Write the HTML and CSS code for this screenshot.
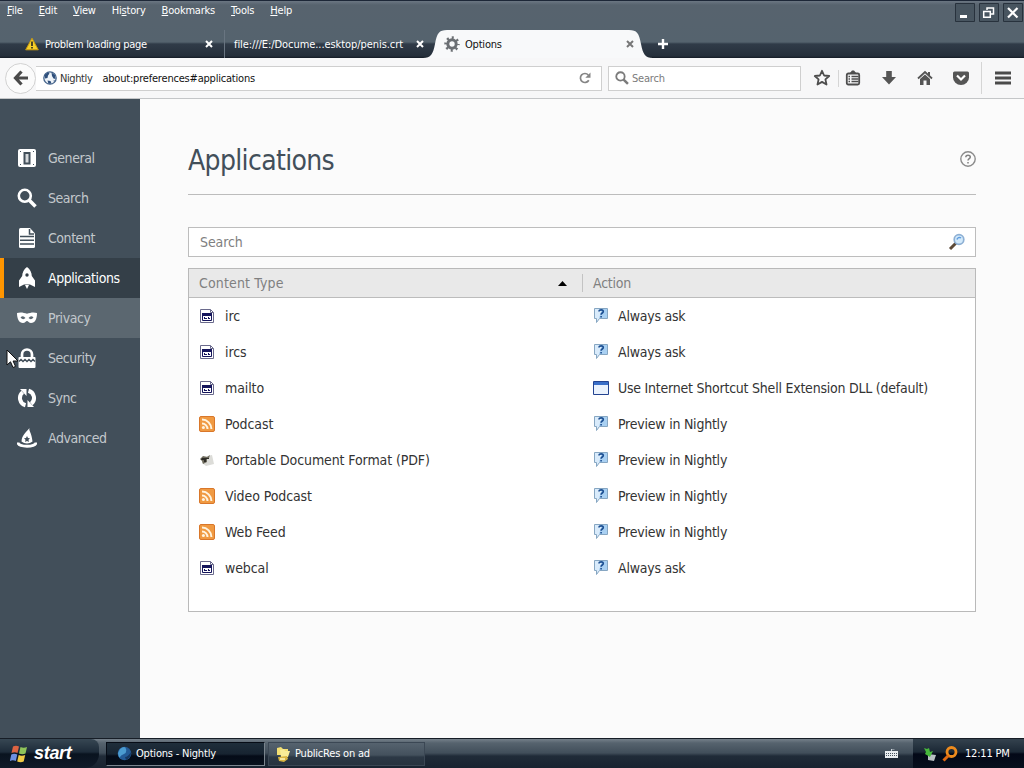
FILE: index.html
```html
<!DOCTYPE html>
<html lang="en">

<head>
    <meta charset="UTF-8">
    <title>Options</title>
    <link rel="stylesheet" href="styles.css">
</head>

<body>
    <!-- Shared icons -->
    <svg class="sprite">
        <symbol id="file" viewBox="0 0 16 16">
            <path d="M1.5 1.5h10l3 3v10h-13z" fill="#fff" stroke="#6a6a8c" />
            <path d="M11.5 1.5v3h3" fill="none" stroke="#6a6a8c" />
            <path d="M3.5 5.5h9v7h-9z" fill="#fff" stroke="#15155c" />
            <path d="M3 5h10v3H3zM5 9h1v2H5zM6 10h2v1H6zM9 9h1v2H9zM10 10h1v1h-1z" fill="#15155c" />
        </symbol>
        <symbol id="feed" viewBox="0 0 16 16">
            <rect x=".5" y=".5" width="15" height="15" rx="1.5" fill="#f09a42" stroke="#d9772a" />
            <path d="M3 7.5a5.5 5.5 0 0 1 5.5 5.5M3 3.6A9.4 9.4 0 0 1 12.4 13" fill="none" stroke="#fff4df" stroke-width="2" />
            <circle cx="4.4" cy="11.6" r="1.5" fill="#fff4df" />
        </symbol>
        <symbol id="pdf" viewBox="0 0 16 16">
            <path d="M4 5l9-2 2 9-8 2-4-3z" fill="#dcdcd8" />
            <path d="M1 7l3-3 4 1 3-2-1 3-2 1v3l-4 2-1-3z" fill="#6d6a5c" />
            <path d="M3 6h7v1H7v3H5V8H2z" fill="#2e2c27" />
        </symbol>
        <symbol id="ask" viewBox="0 0 16 16">
            <path d="M1.5 .5h13v10h-8L3.500 14.500v-4h-2z" fill="#d9ebfb" stroke="#86a6c2" />
            <path d="M9 1h5v9H6z" fill="#a9d0f2" />
            <path d="M6 3.600c0-2.400 4.300-2.300 4.300 0 0 1.600-2.200 1.300-2.200 3.200M8.100 8v1.500" fill="none" stroke="#1b4e91" stroke-width="1.600" />
        </symbol>
        <symbol id="window" viewBox="0 0 16 16">
            <path d="M.5 1.500h15v13H.5z" fill="#eaf2fd" stroke="#234390" />
            <path d="M1 2h14v3H1z" fill="#3a6fc8" />
        </symbol>
        <symbol id="close" viewBox="0 0 8 8">
            <path d="M1 1l6 6M7 1L1 7" fill="none" stroke="currentColor" stroke-width="2" />
        </symbol>
        <symbol id="magnifier" viewBox="0 0 20 20">
            <circle cx="7.800" cy="7.800" r="6" fill="none" stroke="currentColor" stroke-width="2.600" />
            <path d="M12.300 12.300L18.500 18.500" stroke="currentColor" stroke-width="3.600" />
        </symbol>
    </svg>

    <header class="titlebar">
        <nav class="menu">
            <span><u>F</u>ile</span>
            <span><u>E</u>dit</span>
            <span><u>V</u>iew</span>
            <span>Hi<u>s</u>tory</span>
            <span><u>B</u>ookmarks</span>
            <span><u>T</u>ools</span>
            <span><u>H</u>elp</span>
            <div class="window-buttons">
                <svg width="20" height="19"><path class="frame" d="M.5.5h19v18H.5z" /><path d="M5 12h7v3H5z" fill="#fff" /></svg>
                <svg width="20" height="19"><path class="frame" d="M.5.5h19v18H.5z" /><path d="M4.700 8.500h6.600v5.800H4.700zM8 7V5h6.500v6H12" fill="none" stroke="#fff" stroke-width="1.500" /></svg>
                <svg width="20" height="19"><path class="frame" d="M.5.5h19v18H.5z" /><path d="M5 5l9.500 9.500M14.500 5L5 14.500" fill="none" stroke="#fff" stroke-width="2.200" /></svg>
            </div>
        </nav>
        <div class="tabs">
            <div class="tab first">
                <svg width="14" height="14" viewBox="0 0 14 14">
                    <path d="M7 1.200L13.300 12.800H.7z" fill="#f5cf2a" stroke="#c99a10" stroke-linejoin="round" />
                    <path d="M6.200 4.500h1.600v4.500H6.200zM6.200 10h1.600v1.600H6.200z" fill="#222" />
                </svg>
                <span class="label">Problem loading page</span>
                <svg class="close" width="8" height="8"><use href="#close" /></svg>
            </div>
            <div class="tab second">
                <span class="label">file:///E:/Docume...esktop/penis.crt</span>
                <svg class="close" width="8" height="8"><use href="#close" /></svg>
            </div>
            <div class="tab active">
                <svg class="shape" width="234" height="28"><path d="M0 28c8 0 10-4 12-14 2-11 4-14 12-14h182c8 0 10 3 12 14 2 10 4 14 12 14z" fill="#f8f9fa" /></svg>
                <svg width="16" height="16" viewBox="0 0 16 16">
                    <circle cx="8" cy="8" r="4.200" fill="none" stroke="#6b6f73" stroke-width="3" />
                    <circle cx="8" cy="8" r="6.300" fill="none" stroke="#6b6f73" stroke-width="2.800" stroke-dasharray="2 2.948" stroke-dashoffset="1" />
                </svg>
                <span class="label">Options</span>
                <svg class="close" width="8" height="8"><use href="#close" /></svg>
            </div>
            <svg class="new-tab" width="12" height="12"><path d="M6 1v10M1 6h10" stroke="#fff" stroke-width="2.400" /></svg>
        </div>
    </header>

    <div class="toolbar">
        <div class="back">
            <svg width="16" height="16"><path d="M8.500 1.500L2.500 8l6 6.500M3 8h12" fill="none" stroke="#4a4a4a" stroke-width="3.200" /></svg>
        </div>
        <div class="url-bar">
            <svg width="14" height="14" viewBox="0 0 14 14">
                <circle cx="7" cy="7" r="6.200" fill="#eef3f8" stroke="#46658c" stroke-width="1.300" />
                <path d="M1.500 4L5 1.200l1.500 1.300L5 4.500 4.500 7 2 7.500zM8.500 1.500L12 4l.5 4-2-.5L9 5zM4.500 9.500l3 .5 1 2.500-3 .2zM10.500 9.500l1.500-.3-1 1.800z" fill="#2e4f7c" />
            </svg>
            <span class="identity">Nightly</span>
            <span class="address">about:preferences#applications</span>
            <svg class="reload" width="12" height="12" viewBox="0 0 12 12">
                <path d="M9.800 8.300A4.500 4.500 0 1 1 9.300 3" fill="none" stroke="#858585" stroke-width="1.700" />
                <path d="M11.500.5v5.200H6.300z" fill="#858585" />
            </svg>
        </div>
        <div class="search-bar">
            <svg width="14" height="14"><use href="#magnifier" /></svg>
            <span>Search</span>
        </div>
        <div class="tools">
            <svg width="18" height="18" viewBox="0 0 18 18"><path d="M9 1.800l2.100 4.700 5.100.5-3.800 3.400 1.100 5.100L9 12.900l-4.500 2.600 1.100-5.100L1.800 7l5.100-.5z" fill="none" stroke="#4d4d4d" stroke-width="1.800" stroke-linejoin="round" /></svg>
            <div class="divider list">
                <svg width="16" height="16" viewBox="0 0 16 16">
                    <rect x="1.800" y="3.500" width="12.400" height="11" rx="1.500" fill="none" stroke="#4d4d4d" stroke-width="1.800" />
                    <path d="M4.500 3.500L7 .5h2l2.500 3z" fill="#4d4d4d" />
                    <path d="M3.500 6.500H5M6.500 6.500h7M3.500 9h1.500M6.500 9h7M3.500 11.500H5M6.500 11.500h7" stroke="#4d4d4d" stroke-width="1.300" />
                </svg>
            </div>
            <svg width="16" height="16"><path d="M5.200 1h5.600v6H15l-7 7.500L1 7h4.200z" fill="#555" /></svg>
            <svg width="16" height="16"><path d="M1 8.500L8 2l7 6.500" fill="none" stroke="#555" stroke-width="1.800" /><path d="M3 9l5-4.600L13 9v6H9.500v-4.500h-3V15H3zM11 2h2v4h-2z" fill="#555" /></svg>
            <svg width="16" height="16"><path d="M1.500 1.500h13Q16 1.500 16 3v4.500a8 7.500 0 0 1-16 0V3Q0 1.500 1.500 1.500z" fill="#555" /><path d="M4 5.500l4 4 4-4" fill="none" stroke="#fff" stroke-width="2.200" /></svg>
            <div class="divider burger">
                <svg width="16" height="14"><path d="M0 2h16M0 7h16M0 12h16" stroke="#4a4a4a" stroke-width="2.800" /></svg>
            </div>
        </div>
    </div>

    <div class="page">
        <aside class="categories">
            <div class="category">
                <svg width="20" height="20" viewBox="0 0 20 20"><rect x="1" y="1" width="18" height="18" rx="2" fill="#fff" /><path d="M7.500 5h5v10.500h-5z" fill="#d5d9dc" stroke="#424f5a" stroke-width="2" /><path d="M3 3h1v1H3zM16 3h1v1h-1zM3 16h1v1H3zM16 16h1v1h-1z" fill="#424f5a" /></svg>
                <span>General</span>
            </div>
            <div class="category">
                <svg width="20" height="20"><use href="#magnifier" /></svg>
                <span>Search</span>
            </div>
            <div class="category">
                <svg width="20" height="20" viewBox="0 0 20 20"><path d="M2 1.500Q2 0 3.500 0H13l5 5.500V18.500q0 1.500-1.500 1.500h-13Q2 20 2 18.500z" fill="#fff" /><path d="M12.500 1v5H17M3 8.500h14M3 12.300h14M3 16.100h14" fill="none" stroke="#424f5a" stroke-width="1.500" /></svg>
                <span>Content</span>
            </div>
            <div class="category selected">
                <svg width="20" height="22" viewBox="0 0 20 22"><path d="M10 0c3 2 4.800 5.500 4.800 9l3.200 4.500V20l-5-2.500H7L2 20v-6.500L5.200 9C5.200 5.500 7 2 10 0zM8 18h4l-2 4z" fill="#fff" /><circle cx="10" cy="8" r="1.700" fill="#343f48" /></svg>
                <span>Applications</span>
            </div>
            <div class="category hover">
                <svg width="20" height="20" viewBox="0 0 20 20"><path d="M0 5c3-1.200 7-.5 10 .8C13 4.500 17 3.800 20 5c0 6-2 10-6 10-2 0-3-2-4-2s-2 2-4 2c-4 0-6-4-6-10z" fill="#fff" /><path d="M3.500 9.500q2.500-2.500 5 .5-2.500 2.500-5-.5zM16.500 9.500q-2.500-2.500-5 .5 2.500 2.500 5-.5z" fill="#5b6770" /></svg>
                <span>Privacy</span>
            </div>
            <div class="category">
                <svg width="20" height="20" viewBox="0 0 20 20"><path d="M5 10V6.500a5 5 0 0 1 10 0V10" fill="none" stroke="#fff" stroke-width="2.700" /><rect x="1.500" y="9" width="17" height="11" rx="1" fill="#fff" /><path d="M2 13.500l2-2 2 2 2-2 2 2 2-2 2 2 2-2 2 2" fill="none" stroke="#424f5a" stroke-width="1.500" /></svg>
                <span>Security</span>
            </div>
            <div class="category">
                <svg width="20" height="20" viewBox="0 0 20 20"><path d="M8.500 17.300a7.500 7.500 0 0 1-2.800-13M11.500 2.700a7.500 7.500 0 0 1 2.800 13" fill="none" stroke="#fff" stroke-width="4" /><path d="M3 1h6.500v7zM17 19h-6.500v-7z" fill="#fff" /></svg>
                <span>Sync</span>
            </div>
            <div class="category">
                <svg width="20" height="20" viewBox="0 0 20 20"><path d="M12.500 0c-1 3 2 4 3 13.500-3 2.500-8 2.500-11 0C5 7 8.500 5 12.500 0z" fill="#fff" /><path d="M1 14.500c0 5 18 5 18 0" fill="none" stroke="#fff" stroke-width="2.800" /><path d="M10 8l1 2 2 .3-1.500 1.500.4 2.200-1.900-1-1.900 1 .4-2.200L7 10.300 9 10z" fill="#424f5a" /></svg>
                <span>Advanced</span>
            </div>
        </aside>

        <main class="content">
            <div class="heading">
                <h1>Applications</h1>
                <svg width="16" height="16"><circle cx="8" cy="8" r="7.200" fill="none" stroke="#8b8b8b" stroke-width="1.400" /><path d="M5.800 6.300c0-3 4.500-2.700 4.500-.2C10.300 7.700 8 7.700 8 9.500M8 11v1.600" fill="none" stroke="#808080" stroke-width="1.500" /></svg>
            </div>
            <div class="filter">
                <span>Search</span>
                <svg width="18" height="18"><path d="M8 10l-6 6" stroke="#5c4a38" stroke-width="3" /><circle cx="11" cy="6.500" r="4.800" fill="#d3eafb" stroke="#8eb0d4" stroke-width="1.700" /><path d="M9 6.500a2.500 2.500 0 0 1 4-1.500" fill="none" stroke="#5e9ce0" stroke-width="1.500" /></svg>
            </div>
            <div class="list-box">
                <div class="row head">
                    <div class="type"><span>Content Type</span><svg class="sort" width="9" height="5"><path d="M0 5L4.500 0 9 5z" /></svg></div>
                    <div class="action"><span>Action</span></div>
                </div>
                <div class="row">
                    <div class="type"><svg class="icon"><use href="#file" /></svg><span>irc</span></div>
                    <div class="action"><svg class="icon"><use href="#ask" /></svg><span>Always ask</span></div>
                </div>
                <div class="row">
                    <div class="type"><svg class="icon"><use href="#file" /></svg><span>ircs</span></div>
                    <div class="action"><svg class="icon"><use href="#ask" /></svg><span>Always ask</span></div>
                </div>
                <div class="row">
                    <div class="type"><svg class="icon"><use href="#file" /></svg><span>mailto</span></div>
                    <div class="action"><svg class="icon"><use href="#window" /></svg><span>Use Internet Shortcut Shell Extension DLL (default)</span></div>
                </div>
                <div class="row">
                    <div class="type"><svg class="icon"><use href="#feed" /></svg><span>Podcast</span></div>
                    <div class="action"><svg class="icon"><use href="#ask" /></svg><span>Preview in Nightly</span></div>
                </div>
                <div class="row">
                    <div class="type"><svg class="icon"><use href="#pdf" /></svg><span>Portable Document Format (PDF)</span></div>
                    <div class="action"><svg class="icon"><use href="#ask" /></svg><span>Preview in Nightly</span></div>
                </div>
                <div class="row">
                    <div class="type"><svg class="icon"><use href="#feed" /></svg><span>Video Podcast</span></div>
                    <div class="action"><svg class="icon"><use href="#ask" /></svg><span>Preview in Nightly</span></div>
                </div>
                <div class="row">
                    <div class="type"><svg class="icon"><use href="#feed" /></svg><span>Web Feed</span></div>
                    <div class="action"><svg class="icon"><use href="#ask" /></svg><span>Preview in Nightly</span></div>
                </div>
                <div class="row">
                    <div class="type"><svg class="icon"><use href="#file" /></svg><span>webcal</span></div>
                    <div class="action"><svg class="icon"><use href="#ask" /></svg><span>Always ask</span></div>
                </div>
            </div>
        </main>
    </div>

    <footer class="taskbar">
        <div class="start">
            <svg width="19" height="18" viewBox="0 0 19 18">
                <path d="M3 1.500q3-1.500 6 0L7.500 8q-3-1.500-6 0z" fill="#dd6342" />
                <path d="M10.500 2q3 1.500 6.500 0l-1.500 6.500q-3 1.500-6.500 0z" fill="#8fc45a" />
                <path d="M1.300 9.500q3-1.500 6 0L5.800 16q-3-1.500-6 0z" fill="#6d8fe0" />
                <path d="M8.700 10q3 1.500 6.500 0l-1.500 6.500q-3 1.500-6.500 0z" fill="#f0cb45" />
            </svg>
            <span>start</span>
        </div>
        <div class="task current">
            <svg width="15" height="15"><circle cx="7.500" cy="7.500" r="6.800" fill="#235a96" /><path d="M3 3q5-4 6 0t-2 5-4 3-2-4z" fill="#4b9bd0" /><path d="M9 14q5-2 5-8-3 5-6 5z" fill="#16365f" /></svg>
            <span>Options - Nightly</span>
        </div>
        <div class="task">
            <svg width="15" height="16"><path d="M1 2l4-1 2 2h5v6H1z" fill="#f3df72" /><path d="M4 4l4-1 1 2h5l-2 6H5z" fill="#f9ec98" /><path d="M2 11l9-1 1 3-4 3-5-1z" fill="#d8b441" /><path d="M4 13h5" stroke="#fff8c0" stroke-width="1.500" /></svg>
            <span>PublicRes on ad</span>
        </div>
        <svg class="keyboard" width="13" height="9"><rect y="2" width="13" height="7" fill="#e9edf0" /><path d="M1 4.500h11M1 6.500h11" stroke="#47535e" stroke-dasharray="1 1" /><path d="M6.500 2V0h3" fill="none" stroke="#cdd4da" /></svg>
        <div class="tray">
            <svg width="14" height="14"><path d="M5 7l8 1-2 6-6-1z" fill="#b9c0c4" /><path d="M1 1l3 1 2-1 1 4 3-1-3 6-5-3 1-2z" fill="#47b83c" /></svg>
            <svg width="16" height="16"><circle cx="9.500" cy="6" r="4.500" fill="none" stroke="#ee8b1d" stroke-width="2.800" /><path d="M6.500 9.500l-5 5" stroke="#e06a12" stroke-width="3" /></svg>
            <span>12:11 PM</span>
        </div>
    </footer>

    <svg class="cursor" width="13" height="20"><path d="M1 1v15l3.500-3.200L7 18.500l2.500-1.100-2.400-5.400H12z" fill="#fff" stroke="#111" /></svg>
</body>

</html>
```
FILE: styles.css
```css
* {
    box-sizing: border-box;
}

body {
    margin: 0;
    width: 1024px;
    height: 768px;
    overflow: hidden;
    display: flex;
    flex-direction: column;
    background-color: #fbfbfb;
    font-family: "DejaVu Sans Condensed", "Noto Sans", sans-serif;
    font-size: 11px;
    letter-spacing: -0.2px;
    white-space: nowrap;
}

svg {
    display: block;
    flex-shrink: 0;
}

.sprite {
    position: absolute;
    width: 0;
    height: 0;
}

/* Title bar and tabs */
.titlebar {
    height: 58px;
    flex-shrink: 0;
    color: #fff;
    border-top: 1px solid #1d2737;
    background: linear-gradient(#6b7682 0, #57636e 4px, #55636e 41px, #303b48 43px, #252f3b 55px, #141b25 57px);
}

.menu {
    height: 29px;
    padding-left: 7px;
    display: flex;
    align-items: flex-start;
    gap: 16px;
    line-height: 19px;
}

.window-buttons {
    margin: 2px 1px 0 auto;
    display: flex;
    gap: 4px;
}

.frame {
    fill: #485560;
    stroke: #28323d;
}

.tabs {
    height: 28px;
    display: flex;
}

.tab {
    display: flex;
    align-items: center;
    position: relative;
}

.tab .close {
    margin-left: auto;
}

.first {
    width: 225px;
    padding: 0 11px 0 25px;
    gap: 6px;
    border-right: 1px solid #697581;
    letter-spacing: -0.3px;
}

.second {
    width: 203px;
    padding: 0 4px 0 9px;
    letter-spacing: -0.07px;
}

.active {
    width: 229px;
    padding: 0 23px 0 16px;
    gap: 5px;
    color: #111;
}

.active .shape {
    position: absolute;
    left: -5px;
    top: 0;
}

.active > * {
    position: relative;
}

.active .close {
    color: #777;
}

.new-tab {
    align-self: center;
}

/* Navigation toolbar */
.toolbar {
    height: 41px;
    flex-shrink: 0;
    display: flex;
    align-items: center;
    padding-left: 5px;
    background-color: #f7f7f8;
    border-bottom: 1px solid #c4c6c8;
}

.back {
    width: 31px;
    height: 31px;
    flex-shrink: 0;
    display: flex;
    align-items: center;
    justify-content: center;
    border: 1px solid #d2d2d2;
    border-radius: 50%;
    background-color: #fbfbfb;
}

.url-bar,
.search-bar {
    height: 25px;
    display: flex;
    align-items: center;
    background-color: #fff;
    border: 1px solid #cfcfcf;
}

.url-bar {
    width: 566px;
    padding: 0 10px 0 7px;
    border-left: none;
    color: #111;
}

.identity {
    margin: 0 10px 0 3px;
    color: #333;
    letter-spacing: -0.4px;
}

.reload {
    margin-left: auto;
}

.search-bar {
    width: 193px;
    margin-left: 6px;
    padding-left: 6px;
    gap: 3px;
    color: #7b7b7b;
}

.tools {
    height: 33px;
    margin-left: 12px;
    display: flex;
    align-items: center;
    gap: 20px;
}

.divider {
    display: flex;
    align-items: center;
    border-left: 1px solid #d5d5d5;
}

.list {
    height: 17px;
    margin-left: -13px;
    padding-left: 6px;
}

.burger {
    height: 32px;
    margin-left: -8px;
    padding-left: 13px;
}

/* Category list */
.page {
    flex: 1;
    display: flex;
}

.categories {
    width: 140px;
    padding-top: 39px;
    background-color: #424f5a;
}

.category {
    height: 40px;
    padding-left: 17px;
    display: flex;
    align-items: center;
    gap: 11px;
    color: #c2c8cc;
    font-size: 14px;
    letter-spacing: -0.45px;
}

.category svg {
    color: #fff;
}

.selected {
    padding-left: 13px;
    border-left: 4px solid #ff9500;
    background-color: #343f48;
    color: #fff;
}

.hover {
    background-color: #5b6770;
}

/* Applications pane */
.content {
    flex: 1;
    padding: 39px 48px 0;
    color: #333;
    font-size: 14px;
    letter-spacing: -0.1px;
}

.heading {
    height: 57px;
    display: flex;
    justify-content: space-between;
    border-bottom: 1px solid #bcbcbc;
}

.heading svg {
    margin-top: 13px;
}

h1 {
    margin: 0;
    font-size: 28px;
    line-height: 46px;
    font-weight: normal;
    color: #424f5a;
    letter-spacing: -0.65px;
}

.filter {
    height: 30px;
    margin: 32px 0 11px;
    padding: 0 9px 0 11px;
    display: flex;
    align-items: center;
    justify-content: space-between;
    border: 1px solid #bdbdbd;
    background-color: #fff;
    color: #808080;
}

.list-box {
    height: 344px;
    border: 1px solid #b9b9b9;
    background-color: #fff;
}

.row {
    height: 36px;
    display: flex;
    align-items: center;
}

.type,
.action {
    display: flex;
    align-items: center;
    gap: 10px;
    padding-left: 10px;
}

.type {
    width: 394px;
}

.action {
    gap: 9px;
    letter-spacing: -0.23px;
}

.icon {
    width: 16px;
    height: 16px;
}

.head {
    height: 29px;
    border-bottom: 1px solid #bcbcbc;
    background-color: #e9e9e9;
    color: #808080;
    letter-spacing: 0.15px;
}

.head .type {
    height: 18px;
    border-right: 1px solid #c3c3c3;
}

.sort {
    margin: 0 15px 0 auto;
    fill: #000;
}

/* Taskbar */
.taskbar {
    height: 30px;
    flex-shrink: 0;
    display: flex;
    align-items: center;
    color: #fff;
    border-top: 1px solid #161d26;
    background: linear-gradient(#75808a 0, #56636e 4px, #414e5a 14px, #202b38 17px, #182330 29px);
}

.start {
    width: 99px;
    height: 29px;
    margin-right: 7px;
    padding-left: 10px;
    display: flex;
    align-items: center;
    gap: 5px;
    border-radius: 0 8px 14px 0;
    background: linear-gradient(#374753, #1d2b39 13px, #09131f 15px, #101b29);
    font-family: "Liberation Sans", sans-serif;
    font-size: 18px;
    font-weight: bold;
    font-style: italic;
    letter-spacing: -0.3px;
}

.task {
    width: 157px;
    height: 24px;
    margin-left: 3px;
    padding-left: 7px;
    display: flex;
    align-items: center;
    gap: 4px;
    border: 1px solid #3b4754;
    background: linear-gradient(#56636f, #44515d 12px, #2c3845 14px, #27333f);
}

.current {
    width: 159px;
    margin-left: 0;
    padding-left: 10px;
    border-color: #060c16 #7b858e #7b858e #060c16;
    background: linear-gradient(#1f2e3b, #172431 11px, #040b17 13px, #08111d);
}

.keyboard {
    margin: 0 15px 0 auto;
}

.tray {
    width: 111px;
    height: 29px;
    padding-left: 10px;
    display: flex;
    align-items: center;
    gap: 5px;
    background: linear-gradient(#34424e, #1b2835 13px, #030817 15px, #07101d);
}

.tray span {
    padding-left: 2px;
}

.cursor {
    position: absolute;
    left: 6px;
    top: 349px;
}
```
